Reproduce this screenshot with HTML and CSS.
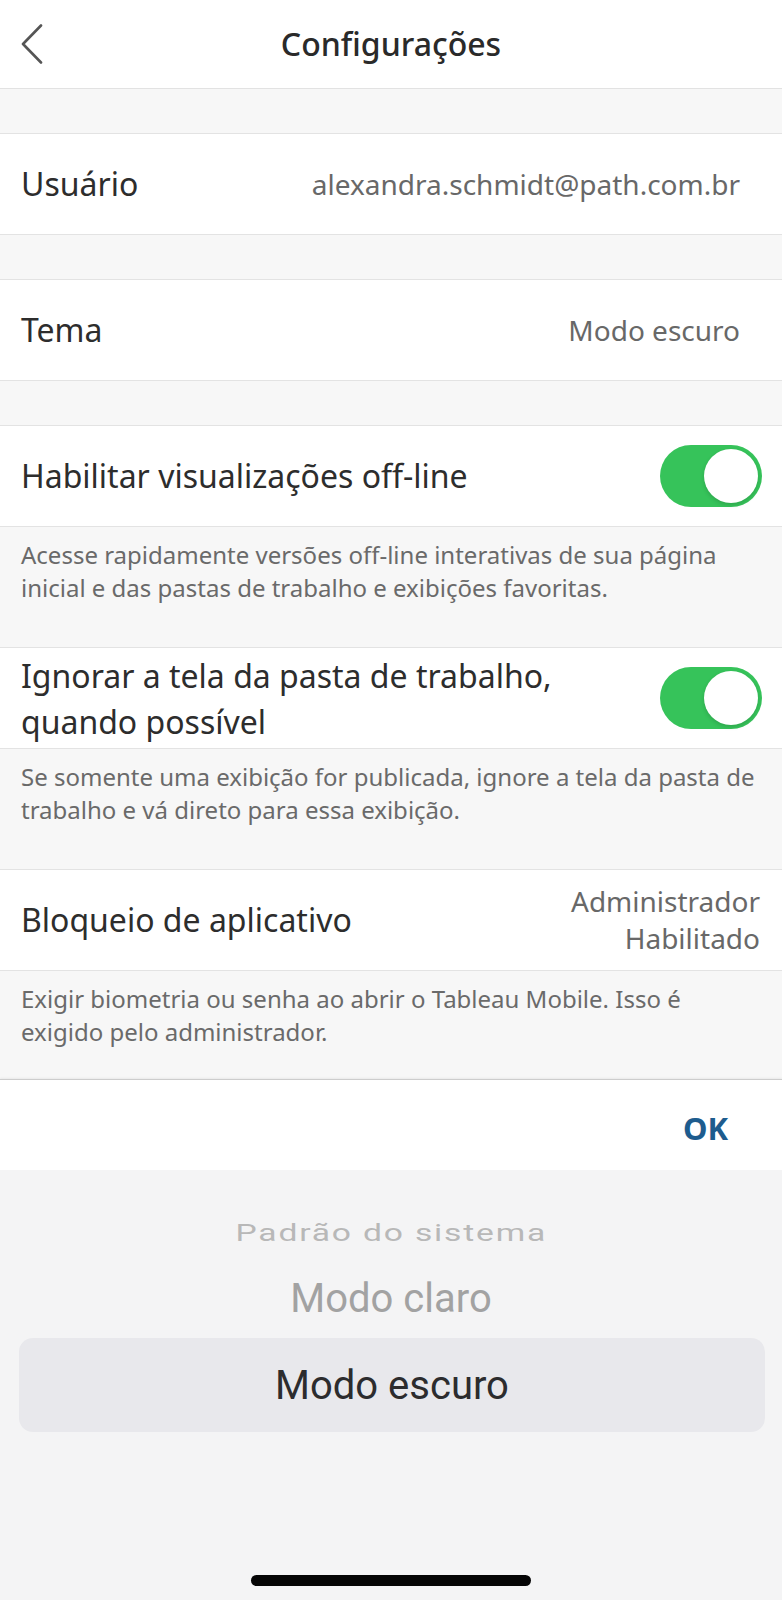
FILE: index.html
```html
<!DOCTYPE html>
<html lang="pt-BR">
<head>
    <meta charset="UTF-8">
    <meta name="viewport" content="width=device-width, initial-scale=1.0">
    <title>Configurações</title>
    <link rel="stylesheet" href="styles.css">
</head>
<body>

    <div class="header">
        <svg class="back" width="22" height="40" viewBox="0 0 22 40">
            <path d="M20 1.5 L2 20 L20 38.5" fill="none" stroke="#555" stroke-width="2.6" stroke-linecap="round" stroke-linejoin="round"/>
        </svg>
        <h1>Configurações</h1>
    </div>

    <div class="section">
        <div class="row">
            <span class="label">Usuário</span>
            <span class="value inset">alexandra.schmidt@path.com.br</span>
        </div>
    </div>

    <div class="section">
        <div class="row">
            <span class="label">Tema</span>
            <span class="value inset">Modo escuro</span>
        </div>
    </div>

    <div class="section">
        <div class="row">
            <span class="label">Habilitar visualizações off-line</span>
            <span class="toggle on"><span class="knob"></span></span>
        </div>
        <p class="note">Acesse rapidamente versões off-line interativas de sua página inicial e das pastas de trabalho e exibições favoritas.</p>
        <div class="row">
            <span class="label wrap">Ignorar a tela da pasta de trabalho, quando possível</span>
            <span class="toggle on"><span class="knob"></span></span>
        </div>
        <p class="note">Se somente uma exibição for publicada, ignore a tela da pasta de trabalho e vá direto para essa exibição.</p>
        <div class="row">
            <span class="label">Bloqueio de aplicativo</span>
            <span class="value stack">Administrador<br>Habilitado</span>
        </div>
        <p class="note last">Exigir biometria ou senha ao abrir o Tableau Mobile. Isso é exigido pelo administrador.</p>
    </div>

    <div class="sheet">
        <div class="toolbar">
            <button class="done">OK</button>
        </div>
        <div class="picker">
            <div class="option far"><span>Padrão do sistema</span></div>
            <div class="option near">Modo claro</div>
            <div class="option selected">Modo escuro</div>
            <div class="home-bar"></div>
        </div>
    </div>

</body>
</html>
```

FILE: styles.css
```css
body {
    margin: 0;
    padding: 0;
    background: #f7f7f7;
    font-family: 'Noto Sans', 'Open Sans', sans-serif;
    color: #2d2d2d;
    height: 1600px;
    overflow: hidden;
}

.header {
    position: relative;
    height: 88px;
    background: #fff;
    border-bottom: 1px solid #e2e2e2;
    display: flex;
    align-items: center;
    justify-content: center;
}

.header .back {
    position: absolute;
    left: 21px;
    top: 24px;
}

.header h1 {
    margin: 0;
    font-size: 32px;
    font-weight: 500;
    color: #2a2a2a;
    padding-bottom: 2px;
}

.section {
    margin-top: 44px;
}

.row {
    display: flex;
    align-items: center;
    justify-content: space-between;
    height: 100px;
    padding: 0 20px 0 21px;
    background: #fff;
    border-top: 1px solid #e3e3e3;
    border-bottom: 1px solid #e3e3e3;
}

.row + .row {
    border-top: none;
}

.label {
    font-size: 32px;
    line-height: 46px;
    color: #2d2d2d;
}

.label.wrap {
    max-width: 600px;
    padding-top: 2px;
}

.value {
    font-size: 28px;
    line-height: 38px;
    color: #686868;
    text-align: right;
}

.value.inset {
    margin-right: 22px;
}

.value.stack {
    line-height: 37px;
    margin-right: 2px;
}

/* iOS style switch */
.toggle {
    width: 102px;
    height: 62px;
    border-radius: 31px;
    background: #e5e5ea;
    display: flex;
    align-items: center;
    box-sizing: border-box;
    padding: 4px;
}

.toggle.on {
    background: #36c35a;
    justify-content: flex-end;
}

.knob {
    width: 54px;
    height: 54px;
    border-radius: 50%;
    background: #fff;
    box-shadow: 0 2px 4px rgba(0, 0, 0, 0.15);
}

.note {
    margin: 0;
    height: 120px;
    box-sizing: border-box;
    padding: 11px 22px 0 21px;
    font-size: 24px;
    line-height: 33px;
    color: #6a6a6a;
}

.note.last {
    height: 108px;
}

.sheet {
    border-top: 1px solid #cdcdcd;
    box-shadow: 0 -1px 2px rgba(0, 0, 0, 0.06);
}

.toolbar {
    height: 90px;
    background: #fff;
    display: flex;
    align-items: center;
    justify-content: flex-end;
    padding-right: 54px;
}

.done {
    border: none;
    background: none;
    padding: 0;
    font-family: 'Noto Sans', sans-serif;
    font-size: 31px;
    font-weight: 700;
    color: #1d5c8e;
    margin-top: 6px;
}

.picker {
    background: #f4f4f5;
    height: 431px;
    box-sizing: border-box;
    padding-top: 38px;
    font-family: Roboto, 'Liberation Sans', sans-serif;
}

.option {
    text-align: center;
    display: flex;
    align-items: center;
    justify-content: center;
}

.option.far {
    height: 50px;
    font-size: 24px;
    letter-spacing: 1.3px;
    color: #b8b8b8;
}

.option.far span {
    display: inline-block;
    transform: scaleX(1.4);
}

.option.near {
    height: 80px;
    font-size: 40px;
    color: #a2a2a2;
}

.option.selected {
    height: 94px;
    margin: 0 17px 0 19px;
    border-radius: 14px;
    background: #e8e8ec;
    font-size: 40px;
    color: #2c2c2e;
}

.home-bar {
    width: 280px;
    height: 11px;
    border-radius: 6px;
    background: #050505;
    margin: 143px auto 0;
}
```
